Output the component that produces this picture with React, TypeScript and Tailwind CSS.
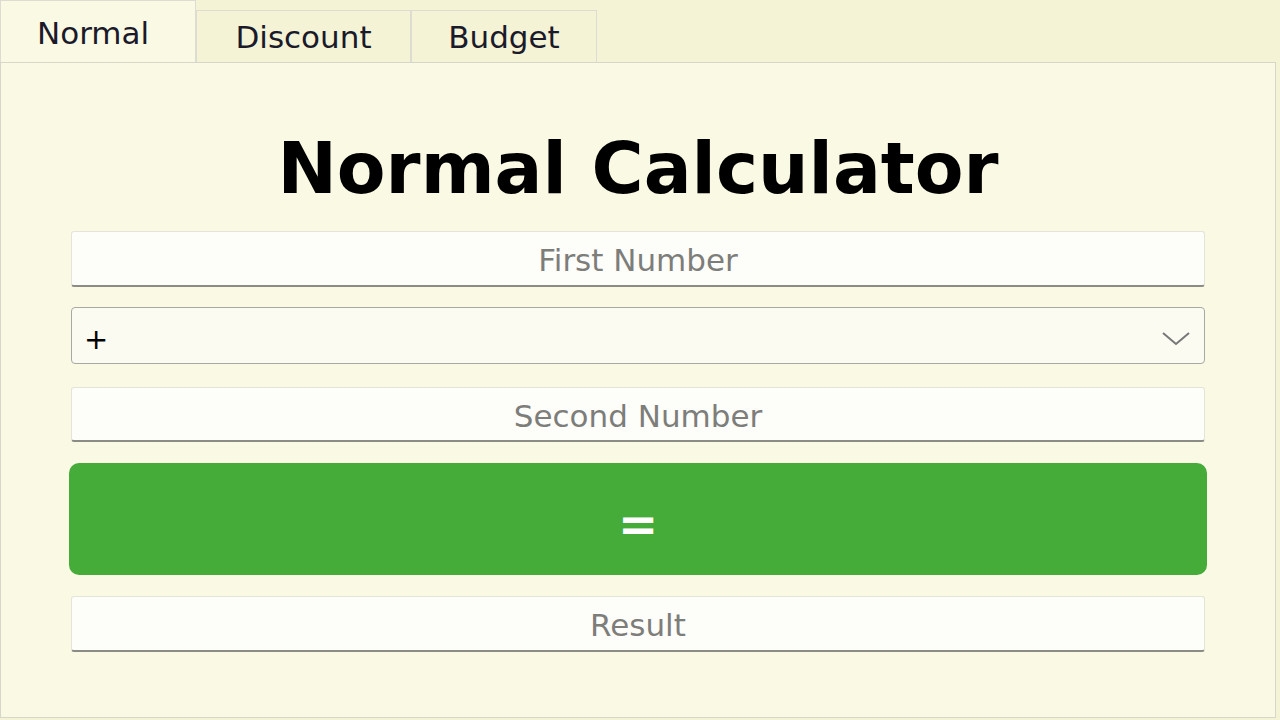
import { useState } from "react";

const TABS = [
  { name: "Normal", w: "w-[196px]" },
  { name: "Discount", w: "w-[215px]" },
  { name: "Budget", w: "w-[186px]" },
];

function Field({ placeholder, h }: { placeholder: string; h: string }) {
  return (
    <input
      type="text"
      placeholder={placeholder}
      className={`w-full ${h} bg-[#fdfdfa] border border-[#e4e4d8] border-b-2 border-b-[#8c8c86] rounded-[3px] pt-[3px] text-center text-[31px] text-black placeholder-[#7d7d7a] outline-none`}
    />
  );
}

export default function App() {
  const [tab, setTab] = useState("Normal");
  const [op, setOp] = useState("+");

  return (
    <div className="w-[1280px] h-[720px] bg-[#f4f3d6] font-['DejaVu_Sans',sans-serif] flex flex-col overflow-hidden">
      {/* tab strip */}
      <div className="flex h-[62px] items-end">
        {TABS.map((t) => (
          <button
            key={t.name}
            onClick={() => setTab(t.name)}
            className={
              t.name === tab
                ? `h-[62px] ${t.w} bg-[#faf9e4] border-t border-l border-r border-[#dcdcd0] text-[31px] text-[#1a1a2a] pl-[36px] text-left pt-[4px]`
                : `h-[52px] ${t.w} bg-[#f4f3d6] border border-b-0 border-[#dcdcd0] text-[31px] text-[#1a1a2a] pt-[2px]`
            }
          >
            {t.name}
          </button>
        ))}
      </div>

      {/* panel */}
      <div className="flex-1 bg-[#faf9e4] border border-[#d6d6ca] mr-[4px] mb-[2px] flex flex-col items-center px-[68px] pt-[70px]">
        <h1 className="text-[71px] font-bold leading-none text-black mb-[27px]">
          Normal Calculator
        </h1>

        <div className="w-full flex flex-col px-[2px]">
          <Field placeholder="First Number" h="h-[56px]" />

          <div className="relative mt-[20px]">
            <select
              value={op}
              onChange={(e) => setOp(e.target.value)}
              className="w-full h-[57px] appearance-none bg-[#fbfbf2] border border-[#a9a9a3] rounded-[4px] pl-[12px] pt-[8px] text-[29px] text-black outline-none"
            >
              <option>+</option>
              <option>-</option>
              <option>*</option>
              <option>/</option>
            </select>
            <svg
              className="absolute right-[14px] top-[24px] pointer-events-none"
              width="30"
              height="16"
              viewBox="0 0 30 16"
              fill="none"
              stroke="#777"
              strokeWidth="2"
            >
              <path d="M2 2 L15 13 L28 2" />
            </svg>
          </div>

          <div className="mt-[23px]">
            <Field placeholder="Second Number" h="h-[55px]" />
          </div>
        </div>

        <button className="w-full h-[112px] mt-[21px] bg-[#45ac3a] rounded-[10px] text-white text-[48px] font-bold pt-[10px]">
          =
        </button>

        <div className="w-full mt-[21px] px-[2px]">
          <Field placeholder="Result" h="h-[56px]" />
        </div>
      </div>
    </div>
  );
}
